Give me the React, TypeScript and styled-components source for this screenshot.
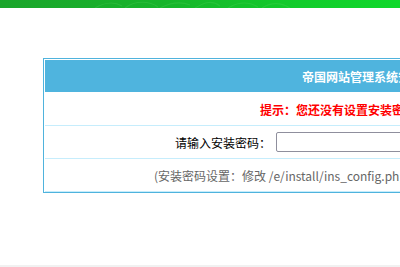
import React from "react";
import styled, { createGlobalStyle } from "styled-components";

const GlobalStyle = createGlobalStyle`
  html, body {
    margin: 0;
    padding: 0;
    background: #ffffff;
    overflow: hidden;
  }
  body {
    font-family: "Noto Sans CJK SC", "Liberation Sans", sans-serif;
    font-size: 12px;
    color: #000;
  }
`;

const TopBar = styled.div`
  position: relative;
  height: 8px;
  background: linear-gradient(90deg, #1ba52b 0%, #17b42b 40%, #12cc2b 75%, #10d82b 100%);
  overflow: hidden;
`;

const Page = styled.div`
  padding: 50px 0 0 43px;
  height: 207px;
`;

const InstallTable = styled.div`
  width: 694px;
  border: 1px solid #4fb3dd;
  padding: 1px 1px 0 1px;
  background: #fff;
`;

const HeaderRow = styled.div`
  height: 32px;
  margin-bottom: 1px;
  background: #4fb4de;
  color: #fff;
  font-weight: bold;
  display: flex;
  align-items: center;
  justify-content: center;
  white-space: nowrap;
`;

const Row = styled.div<{ $tone?: "alert" | "note" }>`
  height: 32px;
  border-bottom: 1px solid #c6edfc;
  display: flex;
  align-items: center;
  justify-content: center;
  white-space: nowrap;
  color: ${({ $tone }) =>
    $tone === "alert" ? "#ff0000" : $tone === "note" ? "#666666" : "#000"};
  font-weight: ${({ $tone }) => ($tone === "alert" ? "bold" : "normal")};
`;

const FormRow = styled(Row)`
  justify-content: flex-start;
`;

const Label = styled.div`
  width: 229px;
  text-align: right;
  padding-right: 3px;
  box-sizing: border-box;
`;

const Field = styled.div`
  padding-left: 2px;
  display: flex;
  align-items: center;
`;

const PassInput = styled.input`
  width: 200px;
  height: 20px;
  box-sizing: border-box;
  border: 1px solid #8f8f9d;
  border-radius: 2px;
  background: #fff;
  padding: 0 3px;
  font: inherit;
`;

const Footer = styled.div`
  height: 10px;
  background: #f1f1f1;
`;

const Swirls = () => (
  <svg
    width="400"
    height="8"
    viewBox="0 0 400 8"
    style={{ position: "absolute", left: 0, top: 0 }}
  >
    <g fill="none" stroke="#5fdc6a" strokeOpacity="0.22" strokeWidth="1.2">
      <path d="M95 8 C105 2 115 2 122 6" />
      <path d="M125 8 C135 0 150 1 158 7" />
      <path d="M160 8 C170 3 180 1 190 5" />
      <path d="M195 8 C205 2 212 0 220 6" />
      <path d="M228 8 C238 2 248 1 258 7" />
      <path d="M262 8 C270 3 280 2 290 8" />
    </g>
  </svg>
);

export default function App() {
  return (
    <>
      <GlobalStyle />
      <TopBar>
        <Swirls />
      </TopBar>
      <Page>
        <InstallTable>
          <HeaderRow>帝国网站管理系统安装：验证密码</HeaderRow>
          <Row $tone="alert">提示：您还没有设置安装密码，请设置后再安装！</Row>
          <FormRow>
            <Label>请输入安装密码：</Label>
            <Field>
              <PassInput type="password" />
            </Field>
          </FormRow>
          <Row $tone="note">
            (安装密码设置：修改 /e/install/ins_config.php 文件中 $ecms_config['installpass'] 变量)
          </Row>
        </InstallTable>
      </Page>
      <Footer />
    </>
  );
}
